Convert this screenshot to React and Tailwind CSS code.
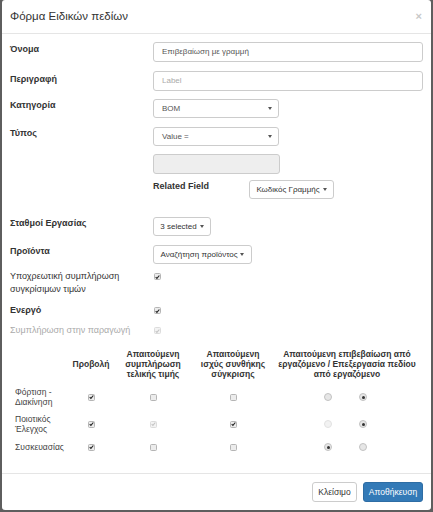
import React from "react";

const font = { fontFamily: '"Liberation Sans", Arial, sans-serif' };

function Caret() {
  return (
    <span className="inline-block w-0 h-0 border-t-[3px] border-t-[#555] border-x-[2.5px] border-x-transparent" />
  );
}

function Check({ checked, disabled }) {
  return (
    <span
      className={`inline-flex items-center justify-center w-[7px] h-[7px] rounded-[1.5px] border ${
        disabled ? "border-[#dcdcdc] bg-[#f3f3f3]" : "border-[#b5b5b5] bg-[#ececec]"
      }`}
    >
      {checked && (
        <svg width="6" height="6" viewBox="0 0 6 6">
          <path
            d="M0.8 3.2 L2.3 4.7 L5.2 1.2"
            fill="none"
            stroke={disabled ? "#c4c4c4" : "#222"}
            strokeWidth="1.3"
          />
        </svg>
      )}
    </span>
  );
}

function Radio({ checked, disabled }) {
  return (
    <span
      className={`inline-flex items-center justify-center w-[8px] h-[8px] rounded-full border ${
        disabled ? "border-[#e2e2e2] bg-[#f2f2f2]" : "border-[#c2c2c2] bg-[#e6e6e6]"
      }`}
    >
      {checked && <span className="w-[3px] h-[3px] rounded-full bg-[#333]" />}
    </span>
  );
}

function Select({ value, width }) {
  return (
    <div
      className={`${width} h-[19px] border border-[#ccc] rounded-[3px] bg-white flex items-center justify-between pl-[8px] pr-[6px] text-[8px] text-[#555]`}
    >
      <span>{value}</span>
      <Caret />
    </div>
  );
}

function DropBtn({ label, width }) {
  return (
    <div
      className={`${width} h-[19px] border border-[#ccc] rounded-[3px] bg-white flex items-center justify-center gap-[3px] text-[8px] text-[#333]`}
    >
      <span>{label}</span>
      <Caret />
    </div>
  );
}

function Label({ children, className = "" }) {
  return (
    <div className={`w-[143px] shrink-0 text-[9px] leading-[12px] font-bold text-[#333] ${className}`}>
      {children}
    </div>
  );
}

export default function App() {
  const rows = [
    { label: ["Φόρτιση -", "Διακίνηση"], h: "h-[28px]", c: [true, false, false], cd: [false, false, false], r: [false, true], rd: false },
    { label: ["Ποιοτικός", "Έλεγχος"], h: "h-[26px]", c: [true, true, true], cd: [false, true, false], r: [false, true], rd: true },
    { label: ["Συσκευασίας"], h: "h-[20px]", c: [true, false, false], cd: [false, false, false], r: [true, false], rd: false },
  ];
  return (
    <div className="w-[433px] h-[512px] bg-[#5e5e5e] pl-[2px] pr-[2px] overflow-hidden" style={font}>
      <div className="w-[429px] h-[510px] bg-white rounded-[3px] flex flex-col">
        {/* header */}
        <div className="h-[34px] shrink-0 border-b border-[#e5e5e5] flex items-center justify-between pl-[8px] pr-[9px]">
          <span className="text-[11.5px] text-[#333]">Φόρμα Ειδικών πεδίων</span>
          <span className="text-[11px] font-bold leading-none text-[#c8c8c8]">×</span>
        </div>
        {/* body */}
        <div className="flex-1 pl-[8px] pr-[8px] flex flex-col">
          <div className="mt-[8px] flex">
            <Label className="pt-[1px]">Όνομα</Label>
            <div className="flex-1 h-[20px] border border-[#ccc] rounded-[3px] flex items-center pl-[8px] text-[8px] text-[#555]">
              Επιβεβαίωση με γραμμή
            </div>
          </div>
          <div className="mt-[9px] flex">
            <Label className="pt-[2px]">Περιγραφή</Label>
            <div className="flex-1 h-[20px] border border-[#ccc] rounded-[3px] flex items-center pl-[8px] text-[8px] text-[#aaa]">
              Label
            </div>
          </div>
          <div className="mt-[8px] flex">
            <Label className="pt-[0px]">Κατηγορία</Label>
            <Select value="BOM" width="w-[126px]" />
          </div>
          <div className="mt-[9px] flex">
            <Label className="pt-[0px]">Τύπος</Label>
            <Select value="Value =" width="w-[126px]" />
          </div>
          <div className="mt-[8px] flex">
            <div className="w-[143px] shrink-0" />
            <div className="w-[127px] h-[20px] border border-[#ccc] rounded-[3px] bg-[#eee]" />
          </div>
          <div className="mt-[6px] flex">
            <div className="w-[143px] shrink-0" />
            <div className="w-[96px] text-[9px] leading-[12px] font-bold text-[#333]">Related Field</div>
            <DropBtn label="Κωδικός Γραμμής" width="w-[85px]" />
          </div>
          <div className="mt-[18px] flex">
            <Label className="pt-[-1px]">Σταθμοί Εργασίας</Label>
            <DropBtn label="3 selected" width="w-[58px]" />
          </div>
          <div className="mt-[9px] flex">
            <Label>Προϊόντα</Label>
            <DropBtn label="Αναζήτηση προϊόντος" width="w-[99px]" />
          </div>
          <div className="mt-[6px] flex">
            <div className="w-[143px] shrink-0 text-[9px] leading-[13px] text-[#333]">
              Υποχρεωτική συμπλήρωση
              <br />
              συγκρίσιμων τιμών
            </div>
            <div className="h-[13px] flex items-center pl-[1px]">
              <Check checked />
            </div>
          </div>
          <div className="mt-[8px] flex">
            <div className="w-[143px] shrink-0 text-[9px] leading-[13px] font-bold text-[#333]">Ενεργό</div>
            <div className="h-[13px] flex items-center pl-[1px]">
              <Check checked />
            </div>
          </div>
          <div className="mt-[7px] flex">
            <div className="w-[143px] shrink-0 text-[9px] leading-[13px] text-[#aaa]">Συμπλήρωση στην παραγωγή</div>
            <div className="h-[13px] flex items-center pl-[1px]">
              <Check checked disabled />
            </div>
          </div>
          {/* table */}
          <div className="mt-[8px] text-[8.5px] leading-[10px] text-[#333]">
            <div className="h-[38px] flex items-center font-bold text-center">
              <div className="w-[60px]" />
              <div className="w-[42px]">Προβολή</div>
              <div className="w-[82px]">
                Απαιτούμενη
                <br />
                συμπλήρωση
                <br />
                τελικής τιμής
              </div>
              <div className="w-[78px]">
                Απαιτούμενη
                <br />
                ισχύς συνθήκης
                <br />
                σύγκρισης
              </div>
              <div className="w-[150px] whitespace-nowrap">
                Απαιτούμενη επιβεβαίωση από
                <br />
                εργαζόμενο / Επεξεργασία πεδίου
                <br />
                από εργαζόμενο
              </div>
            </div>
            {rows.map((row, i) => (
              <div key={i} className={`${row.h} flex items-center`}>
                <div className="w-[60px] pl-[5px] text-[#444]">
                  {row.label.map((l, j) => (
                    <div key={j}>{l}</div>
                  ))}
                </div>
                <div className="w-[42px] flex justify-center">
                  <Check checked={row.c[0]} disabled={row.cd[0]} />
                </div>
                <div className="w-[82px] flex justify-center">
                  <Check checked={row.c[1]} disabled={row.cd[1]} />
                </div>
                <div className="w-[78px] flex justify-center">
                  <Check checked={row.c[2]} disabled={row.cd[2]} />
                </div>
                <div className="w-[150px] flex justify-center gap-[27px] pr-[3px]">
                  <Radio checked={row.r[0]} disabled={row.rd} />
                  <Radio checked={row.r[1]} />
                </div>
              </div>
            ))}
          </div>
        </div>
        {/* footer */}
        <div className="h-[37px] shrink-0 border-t border-[#e5e5e5] flex items-start justify-end gap-[6px] pt-[8px] pr-[8px]">
          <div className="w-[45px] h-[20px] border border-[#ccc] rounded-[3px] bg-white flex items-center justify-center text-[8.5px] text-[#333]">
            Κλείσιμο
          </div>
          <div className="w-[60px] h-[20px] border border-[#2e6da4] rounded-[3px] bg-[#337ab7] flex items-center justify-center text-[8.5px] text-white">
            Αποθήκευση
          </div>
        </div>
      </div>
    </div>
  );
}
